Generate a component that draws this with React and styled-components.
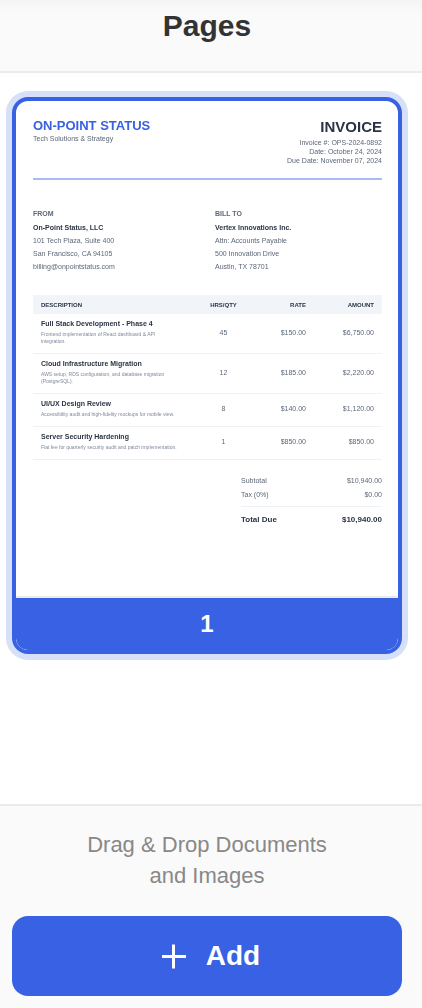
import React from 'react';
import styled, { createGlobalStyle } from 'styled-components';

const Colours = {
  primary: '#3861e4',
  ring: '#d6e0f8',
  panel: '#fafafa',
  line: '#ebebeb',
  heading: '#333333',
  hint: '#888888',
  ink: '#2b3445',
  slate: '#5c6779',
  muted: '#7f8a9b',
  rule: '#eff2f5',
  tableHead: '#f1f5fa',
};

const GlobalStyle = createGlobalStyle`
  * {
    box-sizing: border-box;
  }
  body {
    margin: 0;
    background: #fff;
    font-family: "Liberation Sans", Arial, sans-serif;
  }
`

const Panel = styled.div`
  display: flex;
  flex-direction: column;
  min-height: 100vh;
`
const Header = styled.header`
  padding: 9px 20px 28px 12px;
  border-bottom: 2px solid ${Colours.line};
  background: linear-gradient(#f4f4f4, ${Colours.panel} 12px);
  text-align: center;
`
const Title = styled.h1`
  margin: 0;
  color: ${Colours.heading};
  font-size: 30px;
  line-height: 34px;
`
const PageList = styled.main`
  flex: 1;
  padding: 24px 20px 24px 12px;
`
const PageCard = styled.button`
  display: block;
  width: 100%;
  padding: 0;
  overflow: hidden;
  border: 4px solid ${Colours.primary};
  border-radius: 16px;
  box-shadow: 0 0 0 6px ${Colours.ring};
  background: #fff;
  font-family: inherit;
  text-align: left;
  cursor: pointer;
`
const PageNumber = styled.div`
  border-radius: 0 0 12px 12px;
  background: ${Colours.primary};
  color: #fff;
  font-size: 24px;
  font-weight: bold;
  line-height: 52px;
  text-align: center;
`

const Sheet = styled.div`
  aspect-ratio: 382 / 497;
  padding: 17px 16px 0 17px;
  border-bottom: 2px solid ${Colours.line};
  color: ${Colours.slate};
  font-size: 7px;
`
const Preview = styled.div`
  filter: blur(0.5px);
`
const Letterhead = styled.div`
  display: flex;
  justify-content: space-between;
  height: 62px;
  border-bottom: 2px solid #a9bbf3;
`
const Company = styled.div`
  color: ${Colours.primary};
  font-size: 13px;
  font-weight: bold;
  line-height: 15px;
`
const Tagline = styled.div`
  line-height: 11px;
`
const InvoiceInfo = styled.div`
  line-height: 9px;
  text-align: right;
`
const InvoiceTitle = styled.div`
  margin-bottom: 3px;
  color: ${Colours.ink};
  font-size: 15px;
  font-weight: bold;
  line-height: 17px;
`
const Parties = styled.div`
  display: grid;
  grid-template-columns: 182px 1fr;
  padding: 28px 0 22px;
  line-height: 13px;
`
const PartyLabel = styled.div`
  margin-bottom: 2px;
  color: ${Colours.slate};
  font-weight: bold;
  line-height: 11px;
`
const PartyName = styled.div`
  color: ${Colours.ink};
  font-weight: bold;
`
const Items = styled.table`
  width: 100%;
  border-collapse: separate;
  border-spacing: 0;
  table-layout: fixed;
`
const HeadCell = styled.th`
  width: ${props => props.$width || 'auto'};
  height: 19px;
  padding: 0 8px;
  background: ${Colours.tableHead};
  color: ${Colours.ink};
  font-size: 6px;
  text-align: ${props => props.$align || 'left'};
  white-space: nowrap;
`
const Cell = styled.td`
  padding: 5px 8px 8px;
  border-bottom: 1px solid ${Colours.rule};
  color: ${Colours.slate};
  text-align: ${props => props.$align || 'left'};
`
const ItemName = styled.div`
  margin-bottom: 3px;
  color: ${Colours.ink};
  font-size: 7px;
  font-weight: bold;
  line-height: 9px;
`
const ItemNote = styled.div`
  max-width: 138px;
  color: ${Colours.muted};
  font-size: 5px;
  line-height: 7px;
`
const Totals = styled.div`
  width: 141px;
  margin: 14px 0 0 auto;
`
const TotalRow = styled.div`
  display: flex;
  justify-content: space-between;
  line-height: 14px;
`
const TotalDue = styled(TotalRow)`
  margin-top: 4px;
  padding-top: 6px;
  border-top: 1px solid ${Colours.rule};
  color: ${Colours.ink};
  font-size: 8px;
  font-weight: bold;
`

const Footer = styled.footer`
  padding: 23px 20px 12px 12px;
  border-top: 2px solid ${Colours.line};
  background: ${Colours.panel};
`
const Hint = styled.p`
  margin: 0 0 25px;
  padding: 0 72px;
  color: ${Colours.hint};
  font-size: 22px;
  line-height: 31px;
  text-align: center;
`
const AddButton = styled.button`
  display: flex;
  align-items: center;
  justify-content: center;
  gap: 12px;
  width: 100%;
  height: 80px;
  border: 0;
  border-radius: 16px;
  background: ${Colours.primary};
  color: #fff;
  font-family: inherit;
  font-size: 28px;
  font-weight: bold;
  cursor: pointer;
`

const parties = [
  {
    label: 'FROM',
    name: 'On-Point Status, LLC',
    lines: ['101 Tech Plaza, Suite 400', 'San Francisco, CA 94105', 'billing@onpointstatus.com'],
  },
  {
    label: 'BILL TO',
    name: 'Vertex Innovations Inc.',
    lines: ['Attn: Accounts Payable', '500 Innovation Drive', 'Austin, TX 78701'],
  },
];

const items = [
  {
    name: 'Full Stack Development - Phase 4',
    note: 'Frontend implementation of React dashboard & API integration.',
    qty: '45',
    rate: '$150.00',
    amount: '$6,750.00',
  },
  {
    name: 'Cloud Infrastructure Migration',
    note: 'AWS setup, RDS configuration, and database migration (PostgreSQL).',
    qty: '12',
    rate: '$185.00',
    amount: '$2,220.00',
  },
  {
    name: 'UI/UX Design Review',
    note: 'Accessibility audit and high-fidelity mockups for mobile view.',
    qty: '8',
    rate: '$140.00',
    amount: '$1,120.00',
  },
  {
    name: 'Server Security Hardening',
    note: 'Flat fee for quarterly security audit and patch implementation.',
    qty: '1',
    rate: '$850.00',
    amount: '$850.00',
  },
];

const PlusIcon = () => (
  <svg width="40" height="40" viewBox="0 0 40 40" fill="none" stroke="currentColor" strokeWidth="3" aria-hidden="true">
    <path d="M8 20.5h24M19.5 8.5v24" />
  </svg>
);

const Invoice = () => (
  <Sheet>
    <Preview>
      <Letterhead>
        <div>
          <Company>ON-POINT STATUS</Company>
          <Tagline>Tech Solutions &amp; Strategy</Tagline>
        </div>
        <InvoiceInfo>
          <InvoiceTitle>INVOICE</InvoiceTitle>
          <div>Invoice #: OPS-2024-0892</div>
          <div>Date: October 24, 2024</div>
          <div>Due Date: November 07, 2024</div>
        </InvoiceInfo>
      </Letterhead>
      <Parties>
        {parties.map(party => (
          <div key={party.label}>
            <PartyLabel>{party.label}</PartyLabel>
            <PartyName>{party.name}</PartyName>
            {party.lines.map(line => <div key={line}>{line}</div>)}
          </div>
        ))}
      </Parties>
      <Items>
        <thead>
          <tr>
            <HeadCell>DESCRIPTION</HeadCell>
            <HeadCell $width="43px" $align="center">HRS/QTY</HeadCell>
            <HeadCell $width="69px" $align="right">RATE</HeadCell>
            <HeadCell $width="68px" $align="right">AMOUNT</HeadCell>
          </tr>
        </thead>
        <tbody>
          {items.map(item => (
            <tr key={item.name}>
              <Cell>
                <ItemName>{item.name}</ItemName>
                <ItemNote>{item.note}</ItemNote>
              </Cell>
              <Cell $align="center">{item.qty}</Cell>
              <Cell $align="right">{item.rate}</Cell>
              <Cell $align="right">{item.amount}</Cell>
            </tr>
          ))}
        </tbody>
      </Items>
      <Totals>
        <TotalRow><span>Subtotal</span><span>$10,940.00</span></TotalRow>
        <TotalRow><span>Tax (0%)</span><span>$0.00</span></TotalRow>
        <TotalDue><span>Total Due</span><span>$10,940.00</span></TotalDue>
      </Totals>
    </Preview>
  </Sheet>
);

export default function App() {
  return (
    <Panel>
      <GlobalStyle />
      <Header>
        <Title>Pages</Title>
      </Header>
      <PageList>
        <PageCard type="button">
          <Invoice />
          <PageNumber>1</PageNumber>
        </PageCard>
      </PageList>
      <Footer>
        <Hint>Drag &amp; Drop Documents and Images</Hint>
        <AddButton type="button">
          <PlusIcon />
          Add
        </AddButton>
      </Footer>
    </Panel>
  );
}
